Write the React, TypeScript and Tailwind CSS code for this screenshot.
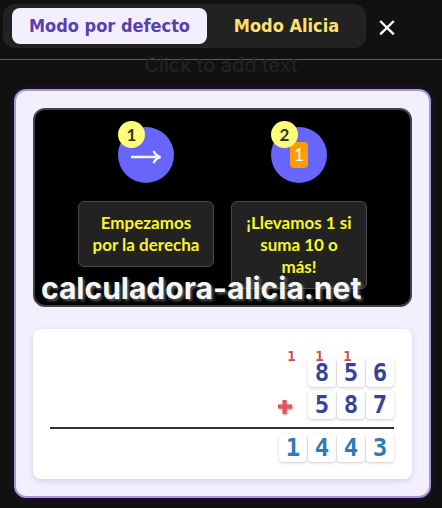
import type { ReactNode } from "react";

interface StepProps {
    number: number;
    icon: ReactNode;
    children: ReactNode;
}

const rows = [
    ["8", "5", "6"],
    ["5", "8", "7"],
];
const result = ["1", "4", "4", "3"];
const carries = ["1", "1", "1", ""];

function Step({ number, icon, children }: StepProps) {
    return (
        <li className="flex w-34 flex-col items-center gap-[18px]">
            <div className="relative flex size-14 items-center justify-center rounded-full bg-[#6865fb]">
                {icon}
                <span className="absolute -top-1.5 left-0 flex size-[27px] items-center justify-center rounded-full bg-[#fffc7c] font-['Lato',sans-serif] text-[17px] leading-6 font-bold text-[#333322]">
                    {number}
                </span>
            </div>
            <p className="w-full rounded-md border border-[#4a4a4a] bg-[#222222] p-2.5 text-center font-['Lato',sans-serif] text-[17px] leading-[22px] font-bold text-[#faf626]">
                {children}
            </p>
        </li>
    );
}

function Digit({ value, color }: { value: string; color: string }) {
    return (
        <span className={`flex h-7 w-7 items-center justify-center rounded-sm bg-white shadow-[0_1px_3px_rgba(0,0,0,0.2)] ${color}`}>
            {value}
        </span>
    );
}

export default function App() {
    return (
        <div className="min-h-screen bg-[#111111] pb-2.5">
            <header className="flex h-[60px] items-start border-b border-[#5a5a5a] pt-1 pl-[3px]">
                <nav className="flex h-11 w-[363px] rounded-xl bg-[#222222] py-1 pl-[9px] font-['DejaVu_Sans_Condensed','DejaVu_Sans',sans-serif] text-lg font-bold">
                    <button className="w-[195px] rounded-lg bg-[#f3efff] text-[#5b3fae]">Modo por defecto</button>
                    <button className="flex-1 text-[#ffe070]">Modo Alicia</button>
                </nav>
                <button aria-label="Cerrar" className="mt-3 ml-[9px] flex size-6 items-center justify-center text-white">
                    <svg viewBox="0 0 24 24" className="size-6" stroke="currentColor" strokeWidth="2.3">
                        <path d="M5.2 5 18.8 18.4M18.8 5 5.2 18.4" />
                    </svg>
                </button>
            </header>

            <p className="-mt-2 h-[37px] pt-px text-center font-['Inter',sans-serif] text-[20px] leading-6 text-[#252525]">
                Click to add text
            </p>

            <main className="mr-[11px] ml-3.5 rounded-xl border-2 border-[#aa93d8] bg-[#f2effe] p-[17px] shadow-[0_0_10px_rgba(60,20,140,0.3)]">
                <section className="relative rounded-xl border-2 border-[#444448] bg-black pt-[17px] pb-4">
                    <ol className="flex justify-center gap-[17px]">
                        <Step
                            number={1}
                            icon={
                                <svg viewBox="0 0 32 14" className="mt-1 h-3.5 w-8" fill="none" stroke="#f4f3ff" strokeWidth="2.4">
                                    <path d="M1 7h29M23.5 1Q26 6 30.5 7Q26 8 23.5 13" />
                                </svg>
                            }
                        >
                            Empezamos por la derecha
                        </Step>
                        <Step
                            number={2}
                            icon={
                                <span className="flex h-[26px] w-[18px] items-center justify-center rounded-sm bg-[#ff9b05] font-['Lato',sans-serif] text-[17px] leading-6 text-white">
                                    1
                                </span>
                            }
                        >
                            ¡Llevamos 1 si suma 10 o más!
                        </Step>
                    </ol>
                    <strong className="absolute bottom-px left-1.5 font-['Inter',sans-serif] text-[30px] leading-8 font-bold text-[#f7f7f7] [text-shadow:2px_2px_3px_rgba(130,130,130,0.7)]">
                        calculadora-alicia.net
                    </strong>
                </section>

                <section className="mt-[22px] rounded-lg bg-white pt-[22px] pr-[18px] pb-[17px] pl-[17px] font-['DejaVu_Sans_Mono',monospace] text-2xl leading-7 font-bold shadow-[0_2px_6px_rgba(0,0,0,0.12)]">
                    {/* carries sit on top of the digit tiles below them */}
                    <div className="relative z-10 flex h-2 items-start justify-end gap-px pr-[5px] text-sm leading-[10px] text-[#c94f58]">
                        {carries.map((carry, i) => (
                            <span key={i} className="w-[27px] text-center">
                                {carry}
                            </span>
                        ))}
                    </div>
                    <div className="flex flex-col gap-1 pb-2">
                        {rows.map((digits, i) => (
                            <div key={i} className="flex items-center justify-end gap-px">
                                {i === 1 && (
                                    <svg viewBox="0 0 16 16" className="mt-1 mr-3.5 size-4 drop-shadow-[1px_1px_1px_rgba(0,0,0,0.4)]" role="img" aria-label="más">
                                        <path d="M5.5 1h4v4.5H15v4H9.5V15h-4V9.5H1v-4h4.5Z" fill="#e65359" />
                                    </svg>
                                )}
                                {digits.map((digit, j) => (
                                    <Digit key={j} value={digit} color="text-[#35449a]" />
                                ))}
                            </div>
                        ))}
                    </div>
                    <div className="flex justify-end gap-px border-t-2 border-[#333333] pt-[5px]">
                        {result.map((digit, i) => (
                            <Digit key={i} value={digit} color="text-[#2e7bb5]" />
                        ))}
                    </div>
                </section>
            </main>
        </div>
    );
}
